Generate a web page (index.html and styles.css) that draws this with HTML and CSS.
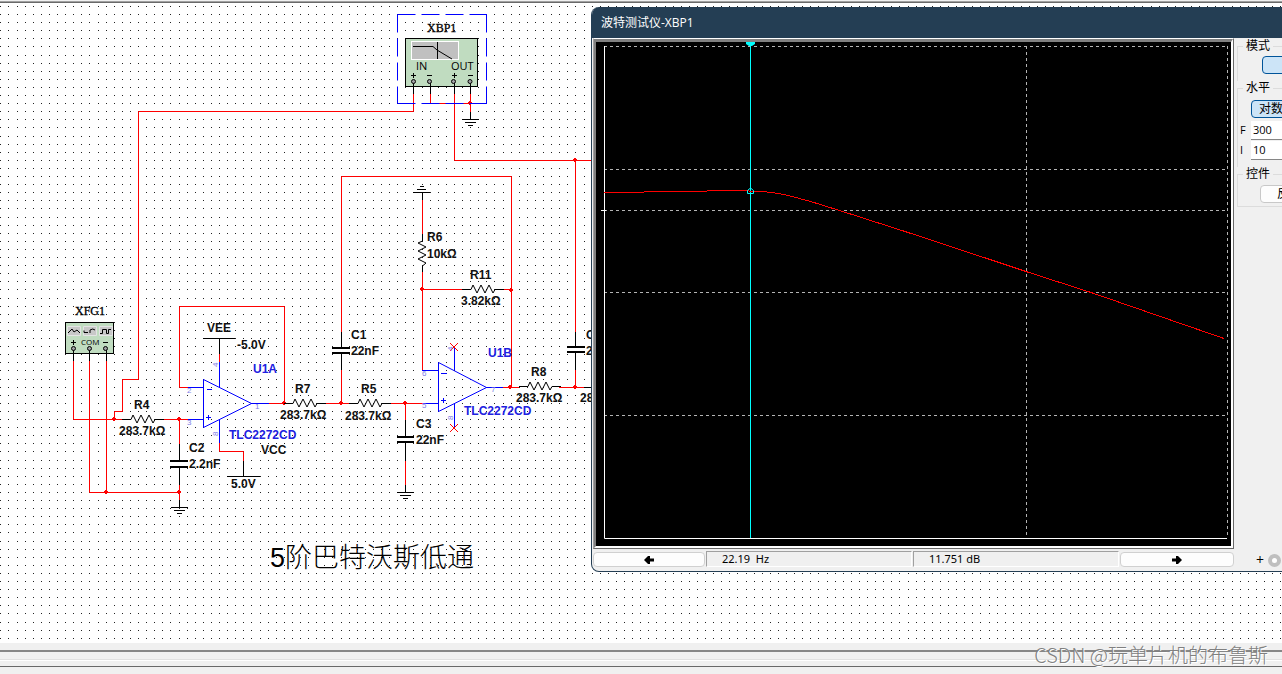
FILE: index.html
```html
<!DOCTYPE html>
<html lang="zh-CN">
<head>
<meta charset="utf-8">
<title>波特测试仪-XBP1</title>
<link rel="stylesheet" href="styles.css">
</head>
<body>
<header class="topbar"></header>
<main class="workspace">
<svg class="sheet" width="100%" height="100%" role="img" aria-label="5阶巴特沃斯低通">
  <defs>
    <pattern id="grid" x="17" y="52" width="81" height="81" patternUnits="userSpaceOnUse">
      <path class="dots" d="M0 .5h81M0 8.500h81M0 16.500h81M0 24.500h81M0 32.500h81M0 40.500h81M0 48.500h81M0 56.500h81M0 64.500h81M0 72.500h81" stroke-dasharray="1 7 1 7 1 7 1 7 1 7 1 7 1 7 1 7 1 7 1 8"/>
    </pattern>
    <path id="res" d="M-13 .5H-4L-2-4L2 4L6-4L10 4L14-4L18 4L20 .5H29"/>
    <g id="ground"><path d="M.5 0V7M-8 7.500H9M-5 10.500H6M-2 13.500H3"/></g>
    <path id="dot" d="M-1-2H1V-1H2V1H1V2H-1V1H-2V-1H-1Z"/>
  </defs>
  <rect width="100%" height="100%" fill="url(#grid)"/>
  <g transform="translate(0 -3)">
    <!-- wires -->
    <g class="wire">
      <path d="M413.500 94V111.500H138.500V379.500H122.500V411.500H114.500V419.500"/>
      <path d="M430.500 94V103.500H470.500V115M470.500 94V104M454.500 94V160.500H592M575.500 160V332"/>
      <path d="M73.500 361V419.500H122M89.500 361V492.500H179M106.500 361V492M161 419.500H188M179.500 419V444M179.500 485V501"/>
      <path d="M188 387.500H179.500V306.500H284.500V403M269 403.500H292M219.500 354V362M219.500 443V451.500H243.500V461"/>
      <path d="M324 403.500H349M341.500 369V403M341.500 332V176.500H511.500V387M389 403.500H423M405.500 403V420M405.500 460V486"/>
      <path d="M422.500 200V234M422.500 272V370.500H424M422 289.500H463M503 289.500H511M503 387.500H519M559 387.500H584M575.500 370V387"/>
    </g>
    <g class="node">
      <use href="#dot" x="470" y="103"/><use href="#dot" x="575" y="160"/><use href="#dot" x="114" y="419"/>
      <use href="#dot" x="179" y="419"/><use href="#dot" x="106" y="492"/><use href="#dot" x="179" y="492"/>
      <use href="#dot" x="284" y="403"/><use href="#dot" x="341" y="403"/><use href="#dot" x="405" y="403"/>
      <use href="#dot" x="422" y="289"/><use href="#dot" x="511" y="290"/><use href="#dot" x="510" y="387"/>
      <use href="#dot" x="575" y="387"/>
    </g>
    <!-- passive parts -->
    <g class="part">
      <use href="#res" x="135" y="419"/><use href="#res" x="297" y="403"/>
      <use href="#res" x="362" y="403"/><use href="#res" x="475" y="289"/>
      <use href="#res" x="532" y="386"/>
      <path d="M422.500 234V241L418 243L426 247L418 251L426 255L418 259L426 263L422.500 266V272"/>
      <use href="#ground" x="179" y="500"/><use href="#ground" x="405" y="485"/><use href="#ground" x="470" y="112"/>
      <path d="M422.500 200V193M413 192.500H430M417 189.500H426M420 186.500H424"/>
      <path d="M179.500 444V460M179.500 468V485M341.500 332V347M341.500 354V370M405.500 420V437M405.500 443V461M575.500 332V346M575.500 353V370M584 387.500H592"/>
      <path d="M203 338.500H235M219.500 339V354M243.500 461V476M227 476.500H260"/>
      <path class="plate" d="M170 461H188M170 467H188M332 348H350M332 353H350M397 437H414M397 442H414M567 347H585M567 352H585"/>
    </g>
    <!-- op-amps -->
    <g class="amp">
      <path d="M203.500 379.500V427.500L251.500 403.500ZM188 387.500H203M188 419.500H203M251 403.500H269M219.500 362V387M219.500 419V443M207 389.500H212M206 417.500H211M208.500 415V420"/>
      <path d="M438.500 362.500V411.500L486.500 387.500ZM422 370.500H438M423 403.500H438M486 387.500H503M454.500 347V370M454.500 403V427M441 373.500H447M441 400.500H446M443.500 398V403"/>
    </g>
    <path class="wire" d="M450 343L458 351M458 343L450 351M450 424L458 432M458 424L450 432"/>
    <g class="pin">
      <text x="187" y="393">2</text><text x="187" y="425">3</text><text x="255" y="409">1</text>
      <text x="422" y="376">6</text><text x="422" y="408">5</text><text x="491" y="392">7</text>
      <text transform="translate(218 367) rotate(-90)">4</text><text transform="translate(218 436) rotate(-90)">8</text>
      <text transform="translate(453 351) rotate(-90)">4</text><text transform="translate(453 420) rotate(-90)">8</text>
    </g>
    <!-- bode plotter block -->
    <g>
      <path class="selection" d="M397.500 14.500H487M397.500 14.500V103.500M486.500 14.500V103.500M397.500 103.500H487"/>
      <rect class="device" x="405.500" y="38.500" width="72" height="48"/>
      <rect class="screen" x="411.500" y="41.500" width="47" height="18"/>
      <path class="part" d="M413 46.500H433L437 50L452 59M437.500 42V59M413.500 82V94M430.500 82V94M454.500 82V94M470.500 82V94M411 75.500H416M413.500 73V78M427 75.500H432M452 75.500H457M454.500 73V78M468 75.500H473"/>
      <g class="terminal"><circle cx="413.500" cy="81.500" r="2"/><circle cx="429.500" cy="81.500" r="2"/><circle cx="453.500" cy="81.500" r="2"/><circle cx="470" cy="81.500" r="2"/></g>
      <text class="port" x="416" y="70">IN</text><text class="port" x="451" y="70">OUT</text>
      <text class="device-name" x="427" y="32">XBP1</text>
    </g>
    <!-- function generator block -->
    <g>
      <rect class="device" x="65.500" y="322.500" width="48" height="31"/>
      <path class="wavebox" d="M67.500 326.500h13v9h-13zM83.500 326.500h13v9h-13zM99.500 326.500h13v9h-13z"/>
      <path class="part" d="M68 333L72 329L74 332L77 330L80 333M84 330.500V332.500H88M90 333V330Q93 328 95 330M100 333.500H102.500V329.500H106.500V333.500H108.500V329.500H111M73.500 349V361M89.500 349V361M106.500 349V361M71 342.500H76M73.500 340V345M103 342.500H108"/>
      <g class="terminal"><circle cx="73.500" cy="348.500" r="2"/><circle cx="89.500" cy="348.500" r="2"/><circle cx="105.500" cy="348.500" r="2"/></g>
      <text class="com" x="81" y="345">COM</text>
      <text class="device-name" x="75" y="315">XFG1</text>
    </g>
    <g class="label">
      <text x="134" y="409">R4</text><text x="119" y="435">283.7kΩ</text>
      <text x="189" y="452">C2</text><text x="189" y="468">2.2nF</text>
      <text x="207" y="332">VEE</text><text x="237" y="349">-5.0V</text>
      <text x="261" y="454">VCC</text><text x="231" y="488">5.0V</text>
      <text x="295" y="393">R7</text><text x="280" y="419">283.7kΩ</text>
      <text x="361" y="393">R5</text><text x="345" y="420">283.7kΩ</text>
      <text x="351" y="339">C1</text><text x="351" y="355">22nF</text>
      <text x="416" y="428">C3</text><text x="416" y="444">22nF</text>
      <text x="427" y="241">R6</text><text x="427" y="258">10kΩ</text>
      <text x="470" y="279">R11</text><text x="461" y="305">3.82kΩ</text>
      <text x="531" y="376">R8</text><text x="516" y="402">283.7kΩ</text>
      <text x="586" y="339">C4</text><text x="586" y="355">2.2nF</text><text x="580" y="402">283.7kΩ</text>
    </g>
    <g class="label blue">
      <text x="253" y="373">U1A</text><text x="229" y="439">TLC2272CD</text>
      <text x="488" y="357">U1B</text><text x="464" y="415">TLC2272CD</text>
    </g>
    <text class="caption" x="270" y="567">5阶巴特沃斯低通</text>
  </g>
</svg>

<section class="window">
  <h1 class="title">波特测试仪-XBP1</h1>
  <div class="content">
    <div class="left">
      <div class="frame">
        <svg class="plot" viewBox="596 42 635 504">
          <path class="dash" d="M604 46.500H1227M604 169.500H1227M604 210.500H1227M604 292.500H1227M604 415.500H1227M1026.500 46V538M1227.500 46V538"/>
          <path class="axis" d="M604.500 46V538.500H1227M601 210.500H606"/>
          <path class="cursor" d="M750.500 42V538"/>
          <path class="curve" d="M604 192.500H644M644 191.500H707M707 190.500H749M749 191L763 191.500L779 193.500L790 196L809 201L838 210L905 231.500L990 259.500L1026 271.500L1091 292.500L1224 338.500"/>
          <path class="handle" d="M746 42H755V44L752 46H749L746 44Z"/>
          <path class="marker" d="M750.500 188L753.500 190.500V193.500H747.500V190.500Z"/>
        </svg>
      </div>
      <div class="status">
        <button class="arrow" aria-label="左移"><svg width="10" height="8" viewBox="0 0 10 8"><path d="M0 4L4 0H6V2.500H10V5.500H6V8H4Z"/></svg></button>
        <output class="cell">22.19&nbsp; Hz</output>
        <output class="cell">11.751 dB</output>
        <button class="arrow" aria-label="右移"><svg width="10" height="8" viewBox="0 0 10 8"><path d="M10 4L6 0H4V2.500H0V5.500H4V8H6Z"/></svg></button>
      </div>
    </div>
    <aside class="panel">
      <fieldset class="group mode"><legend>模式</legend><button class="push on" aria-label="幅值"></button></fieldset>
      <fieldset class="group scale"><legend>水平</legend>
        <button class="push on log">对数</button>
        <label class="field"><span>F</span><input value="300"></label>
        <label class="field"><span>I</span><input value="10"></label>
      </fieldset>
      <fieldset class="group control"><legend>控件</legend><button class="push">反向</button></fieldset>
      <label class="input-port"><span>+</span><input type="radio" disabled></label>
    </aside>
  </div>
</section>
</main>
<footer class="bottombar"><span class="watermark">CSDN @玩单片机的布鲁斯</span></footer>
</body>
</html>
```

FILE: styles.css
```css
* { box-sizing: border-box; }

body {
  display: flex;
  flex-direction: column;
  min-height: 100vh;
  margin: 0;
  overflow: hidden;
  background: #fff;
  font: 12px/16px "Open Sans", "Noto Sans CJK SC", sans-serif;
  color: #000;
}

.topbar {
  height: 3px;
  border-top: 1px solid #f0f0f0;
  border-bottom: 1px solid #696969;
  background: #a0a0a0;
}

.workspace {
  position: relative;
  flex: 1;
  min-height: 640px;
  overflow: hidden;
}

.sheet {
  position: absolute;
  inset: 0;
  font-family: "Liberation Sans", "Noto Sans CJK SC", sans-serif;
}

.dots { stroke: #222; fill: none; shape-rendering: crispEdges; }
.wire, .part, .amp { fill: none; stroke-width: 1; }
.wire { stroke: #ff0000; }
.part { stroke: #000; }
.plate { stroke-width: 2; }
.amp { stroke: #0000ff; }
.node { fill: #ff0000; }
.device { fill: #c0dcc0; stroke: #000; }
.screen { fill: #c0c0c0; stroke: #fff; }
.wavebox { fill: #c8c8c8; stroke: #e4e4e4; }
.terminal { fill: #a0a0a4; stroke: #000; }
.selection { fill: none; stroke: #0000ff; stroke-dasharray: 18 6; }
.pin { font-size: 8px; fill: #8080e8; }
.port { font: 11px "Open Sans", sans-serif; }
.com { font: 8px "Open Sans", sans-serif; }
.device-name { font: 12px "Liberation Serif", serif; fill: #000; stroke: #000; stroke-width: .3px; }
.label { font-size: 12px; font-weight: bold; fill: #111; }
.blue { fill: #2020e0; }
.caption { font-size: 27px; font-weight: 300; }

.window {
  position: absolute;
  top: 4px;
  left: 591px;
  right: -60px;
  overflow: hidden;
  border: 1px solid #243e54;
  border-top: 0;
  border-radius: 8px;
  background: #f0f0f0;
}

.title {
  margin: 0;
  padding: 0 9px;
  background: #243e54;
  color: #fff;
  font-size: 12px;
  font-weight: 400;
  line-height: 31px;
}

.content { display: flex; }
.left { flex: 1; padding: 0 1px; }

.frame {
  border: 1px solid;
  border-color: #fff #696969 #696969 #a0a0a0;
}

.plot {
  display: block;
  width: 100%;
  border: 2px solid;
  border-width: 3px 2px 2px;
  border-color: #808080 #fff #fff #808080;
  background: #000;
}

.dash { fill: none; stroke: #b4b4b4; stroke-dasharray: 3 3; }
.axis { fill: none; stroke: #fff; }
.cursor, .marker { fill: none; stroke: #00ffff; }
.handle { fill: #00ffff; }
.curve { fill: none; stroke: #ff0000; shape-rendering: crispEdges; }

.status {
  display: grid;
  grid-template-columns: 112px 1fr 1fr 114px;
  gap: 1px;
  padding: 2px 0 4px;
}

.arrow {
  display: flex;
  align-items: center;
  justify-content: center;
  height: 15px;
  margin-top: 1px;
  padding: 0;
  border: 1px solid #d0d0d0;
  border-radius: 4px;
  background: #fdfdfd;
}

.cell {
  height: 16px;
  padding: 0 15px;
  border: 1px solid;
  border-color: #a0a0a0 #fff #fff #a0a0a0;
  font: 11px/14px "Noto Sans", sans-serif;
}

.panel {
  display: flex;
  flex-direction: column;
  width: 106px;
  padding: 1px 2px 3px;
}

.group {
  margin: 0;
  padding: 0;
  border: 1px solid #dcdcdc;
  border-bottom: 0;
}

.group legend {
  margin-left: 5px;
  padding: 0 3px;
  line-height: 14px;
  white-space: nowrap;
}

.mode { height: 42px; }
.mode .push { margin: 3px 0 0 24px; }
.scale { height: 86px; padding-left: 2px; }
.scale legend { margin-left: 3px; }
.control { height: 40px; border-bottom: 1px solid #dcdcdc; }
.control .push { margin: 4px 0 0 22px; padding-left: 16px; }

.push {
  display: block;
  width: 64px;
  height: 18px;
  padding: 0 7px;
  border: 1px solid #c8c8c8;
  border-radius: 4px;
  background: #fdfdfd;
  font: inherit;
  line-height: 16px;
  text-align: left;
}

.on { border-color: #005499; background: #cce4f7; }
.scale .log { margin: 5px 0 2px 11px; }

.field {
  display: grid;
  grid-template-columns: 11px 64px;
  align-items: center;
  height: 20px;
  font-size: 11px;
}

.field input {
  width: 64px;
  height: 19px;
  padding: 0 2px;
  border: 0;
  border-bottom: 1px solid #868686;
  background: #fff;
  font: inherit;
}

.input-port {
  display: flex;
  align-items: center;
  gap: 4px;
  margin-top: auto;
  padding-left: 19px;
  font-size: 14px;
}

.input-port input {
  appearance: none;
  width: 13px;
  height: 13px;
  margin: 0;
  border: 4px solid #bfbfbf;
  border-radius: 50%;
  background: #fff;
}

.bottombar {
  height: 31px;
  padding-right: 14px;
  background: linear-gradient(#f0f0f0 7px, #868686 7px 9px, #f0f0f0 9px 16px, #e0e0e0 16px 17px, #fff 17px 18px, #f0f0f0 18px 23px, #696969 23px 24px, #f0f0f0 24px);
  text-align: right;
}

.watermark {
  color: #808080;
  font: 300 20px/24px "Noto Sans CJK SC", sans-serif;
  text-shadow: 1px 1px #fff;
}
```
